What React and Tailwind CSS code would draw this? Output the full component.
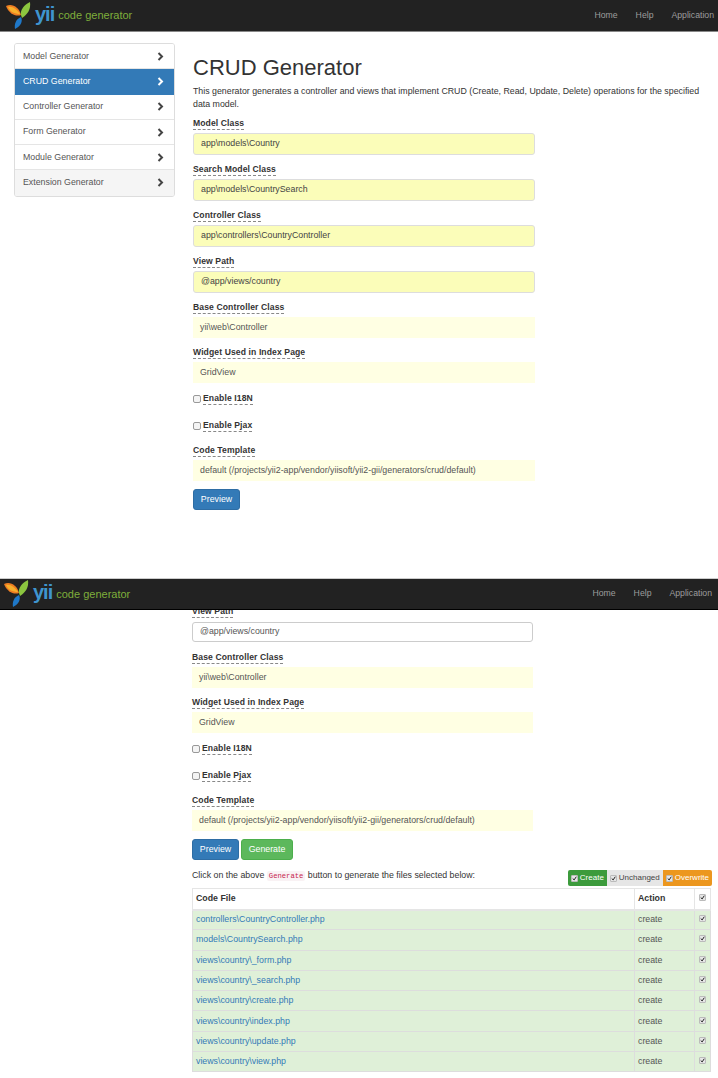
import React from "react";

const font = { fontFamily: '"Liberation Sans", Arial, sans-serif' };

function Logo() {
  return (
    <svg width="26" height="28" viewBox="0 0 26 28" className="shrink-0">
      <path d="M0 4 C6 1 13 5 15 13 C10 15 3 12 0 4 Z" fill="#ee7d22" />
      <path d="M2 5 C7 4 11 8 14 12 C9 12 4 10 2 5 Z" fill="#f6b02c" />
      <path d="M15 13 C14 8 18 3 24 0 C25 7 22 12 16 16 Z" fill="#8cc63f" />
      <path d="M15 15 C17 19 15 24 9 27 C8 22 10 17 15 15 Z" fill="#1f78c8" />
    </svg>
  );
}

function Nav({ bottomClass, pad, h }) {
  return (
    <div className={`bg-[#222222] flex items-center justify-between shrink-0 ${h} ${bottomClass} ${pad}`}>
      <div className="flex items-center">
        <Logo />
        <span className="text-[20px] font-bold text-[#3f95cf] leading-none ml-[3px] -mt-[4px] tracking-[-1px]">yii</span>
        <span className="text-[11px] text-[#7fae3b] ml-[4px]">code generator</span>
      </div>
      <div className="flex gap-[18px] text-[8.7px] text-[#9d9d9d]">
        <span>Home</span>
        <span>Help</span>
        <span className="whitespace-nowrap">Application</span>
      </div>
    </div>
  );
}

function Label({ children }) {
  return (
    <span className="inline-block font-bold text-[8.6px] leading-[11px] tracking-[0.1px] text-[#333333] border-b border-dashed border-[#888888]">
      {children}
    </span>
  );
}

function Field({ label, value, kind = "plain", className = "" }) {
  const box =
    kind === "yellow"
      ? "bg-[#fbfdb9] border border-[#dddddd] rounded-[3px] h-[22px] pl-[7px] text-[#444444]"
      : "bg-[#ffffe3] h-[21px] pl-[7px] text-[#555555]";
  return (
    <div className={className}>
      <div className="h-[16px] flex items-start">
        <Label>{label}</Label>
      </div>
      <div className={`flex items-center text-[8.8px] mt-[-1px] ${box}`}>{value}</div>
    </div>
  );
}

function Check({ label, className = "" }) {
  return (
    <div className={`flex items-center h-[12px] ${className}`}>
      <span className="w-[8px] h-[8px] border border-[#999999] rounded-[2px] bg-[#f4f4f4] mr-[2px] shrink-0" />
      <Label>{label}</Label>
    </div>
  );
}

function Tick({ className = "" }) {
  return (
    <span className={`inline-flex items-center justify-center w-[7px] h-[7px] bg-[#e6e6e6] border border-[#bbbbbb] rounded-[1px] ${className}`}>
      <svg width="7" height="7" viewBox="0 0 7 7">
        <path d="M1 3.5 L3 5.5 L6 1" stroke="#222222" strokeWidth="1.4" fill="none" />
      </svg>
    </span>
  );
}

const PreviewBtn = () => (
  <span className="inline-flex items-center justify-center w-[47px] h-[21px] bg-[#337ab7] border border-[#2e6da4] rounded-[3px] text-white text-[8.8px]">
    Preview
  </span>
);

const menu = [
  "Model Generator",
  "CRUD Generator",
  "Controller Generator",
  "Form Generator",
  "Module Generator",
  "Extension Generator",
];

const files = [
  "controllers\\CountryController.php",
  "models\\CountrySearch.php",
  "views\\country\\_form.php",
  "views\\country\\_search.php",
  "views\\country\\create.php",
  "views\\country\\index.php",
  "views\\country\\update.php",
  "views\\country\\view.php",
];

function Chevron({ color }) {
  return (
    <svg width="7" height="9" viewBox="0 0 7 9">
      <path d="M1.5 1 L5 4.5 L1.5 8" stroke={color} strokeWidth="2" fill="none" />
    </svg>
  );
}

export default function App() {
  return (
    <div style={font} className="w-[718px] h-[1078px] overflow-hidden bg-white text-[#333333] flex flex-col">
      <div className="h-[578px] shrink-0 flex flex-col">
        <Nav h="h-[32px]" bottomClass="border-b border-[#888888]" pad="pl-[6px] pr-[4px]" />
        <div className="flex pl-[14px] pt-[11px]">
          <div className="w-[161px] shrink-0 self-start border border-[#dddddd] rounded-[3px] overflow-hidden">
            {menu.map((m, i) => {
              const active = i === 1;
              const last = i === 5;
              return (
                <div
                  key={m}
                  className={`h-[25.3px] flex items-center justify-between pl-[8px] pr-[10px] text-[8.8px] border-b ${
                    active
                      ? "bg-[#337ab7] text-white border-[#337ab7]"
                      : last
                      ? "bg-[#f5f5f5] text-[#555555] border-transparent"
                      : "bg-white text-[#555555] border-[#e5e5e5]"
                  }`}
                >
                  <span>{m}</span>
                  <Chevron color={active ? "#ffffff" : "#444444"} />
                </div>
              );
            })}
          </div>
          <div className="ml-[18px] w-[342px]">
            <h1 className="text-[22px] leading-[27px] text-[#333333] mt-[11px] whitespace-nowrap">CRUD Generator</h1>
            <p className="text-[8.8px] leading-[13px] mt-[4px] w-[510px] text-[#333333]">
              This generator generates a controller and views that implement CRUD (Create, Read, Update, Delete) operations for the specified data model.
            </p>
            <Field className="mt-[7px]" label="Model Class" value="app\models\Country" kind="yellow" />
            <Field className="mt-[9px]" label="Search Model Class" value="app\models\CountrySearch" kind="yellow" />
            <Field className="mt-[9px]" label="Controller Class" value="app\controllers\CountryController" kind="yellow" />
            <Field className="mt-[9px]" label="View Path" value="@app/views/country" kind="yellow" />
            <Field className="mt-[9px]" label="Base Controller Class" value="yii\web\Controller" />
            <Field className="mt-[9px]" label="Widget Used in Index Page" value="GridView" />
            <Check className="mt-[10px]" label="Enable I18N" />
            <Check className="mt-[15px]" label="Enable Pjax" />
            <Field className="mt-[13px]" label="Code Template" value="default (/projects/yii2-app/vendor/yiisoft/yii2-gii/generators/crud/default)" />
            <div className="mt-[8px] flex">
              <PreviewBtn />
            </div>
          </div>
        </div>
      </div>

      <div className="h-[500px] flex flex-col border-t border-[#cccccc]">
        <Nav h="h-[31px]" bottomClass="border-b border-black" pad="pl-[4px] pr-[6px]" />
        <div className="h-[12px] overflow-hidden pl-[192px]">
          <div className="flex -mt-[4px]">
            <Label>View Path</Label>
          </div>
        </div>
        <div className="ml-[192px] w-[341px]">
          <div className="flex items-center h-[20px] bg-white border border-[#cccccc] rounded-[3px] pl-[7px] text-[8.8px] text-[#555555]">
            @app/views/country
          </div>
          <Field className="mt-[10px]" label="Base Controller Class" value="yii\web\Controller" />
          <Field className="mt-[9px]" label="Widget Used in Index Page" value="GridView" />
          <Check className="mt-[10px]" label="Enable I18N" />
          <Check className="mt-[15px]" label="Enable Pjax" />
          <Field className="mt-[13px]" label="Code Template" value="default (/projects/yii2-app/vendor/yiisoft/yii2-gii/generators/crud/default)" />
          <div className="mt-[8px] flex gap-[2px]">
            <PreviewBtn />
            <span className="inline-flex items-center justify-center w-[52px] h-[21px] bg-[#5cb85c] border border-[#4cae4c] rounded-[3px] text-white text-[8.8px]">
              Generate
            </span>
          </div>
        </div>

        <div className="ml-[192px] w-[520px] mt-[9px] flex items-start justify-between h-[19px]">
          <span className="text-[8.8px] leading-[13px] whitespace-nowrap">
            Click on the above{" "}
            <code className="text-[7.2px] px-[2px] py-[1px] bg-[#f9f2f4] text-[#c7254e] rounded-[2px]" style={{ fontFamily: '"Liberation Mono", monospace' }}>
              Generate
            </code>{" "}
            button to generate the files selected below:
          </span>
          <div className="flex text-[8px] h-[16px] mt-[1px]">
            <span className="flex items-center px-[3px] bg-[#3c9b3c] text-white rounded-l-[2px]"><Tick className="mr-[2px]" />Create</span>
            <span className="flex items-center px-[3px] bg-[#e6e6e6] text-[#444444]"><Tick className="mr-[2px]" />Unchanged</span>
            <span className="flex items-center px-[3px] bg-[#ec971f] text-white rounded-r-[2px]"><Tick className="mr-[2px]" />Overwrite</span>
          </div>
        </div>

        <table className="ml-[192px] w-[519px] border-collapse text-[8.8px] table-fixed">
          <thead>
            <tr className="h-[21px]">
              <th className="border border-[#e5e5e5] border-b-2 text-left font-bold pl-[3px]">Code File</th>
              <th className="w-[60px] border border-[#e5e5e5] border-b-2 text-left font-bold pl-[3px]">Action</th>
              <th className="w-[16px] border border-[#e5e5e5] border-b-2 text-center"><Tick /></th>
            </tr>
          </thead>
          <tbody>
            {files.map((f) => (
              <tr key={f} className="h-[20.3px] bg-[#dff0d8]">
                <td className="border border-[#dddddd] pl-[3px] text-[#337ab7]">{f}</td>
                <td className="border border-[#dddddd] pl-[3px] text-[#555555]">create</td>
                <td className="border border-[#dddddd] text-center"><Tick /></td>
              </tr>
            ))}
          </tbody>
        </table>
      </div>
    </div>
  );
}
